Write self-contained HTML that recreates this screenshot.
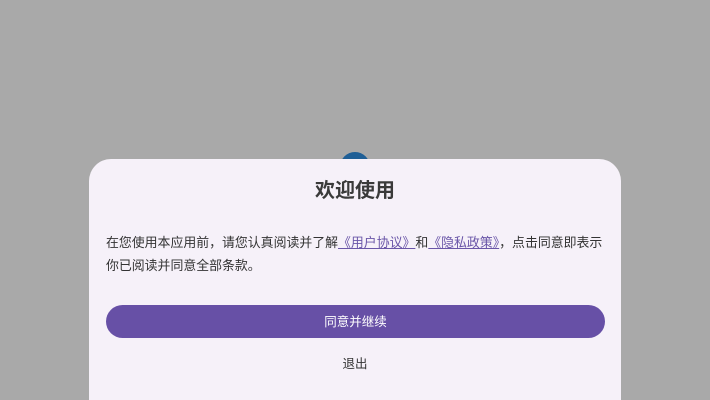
<!DOCTYPE html>
<html><head><meta charset="utf-8"><style>
html,body{margin:0;padding:0;width:710px;height:400px;overflow:hidden;background:#a9a9a9;font-family:"Liberation Sans","Noto Sans CJK SC",sans-serif;}
.dot{position:absolute;left:340px;top:152px;width:30px;height:30px;border-radius:50%;background:#1f5f96;}
.card{position:absolute;left:89px;top:159px;width:532px;height:241px;background:#f6f1f9;border-radius:22px 22px 0 0;}
.title{position:absolute;left:0;width:710px;top:177px;text-align:center;font-size:20px;font-weight:bold;color:#3a3a3a;line-height:28px;}
.body{position:absolute;left:106px;top:231px;width:500px;font-size:12.9px;line-height:23px;color:#333;}
.body a{color:#6a56a8;text-decoration:underline;}
.btn{position:absolute;left:106px;top:305px;width:499px;height:33px;border-radius:17px;background:#6750a6;color:#fff;font-size:12.5px;text-align:center;line-height:35px;}
.exit{position:absolute;left:0;width:710px;top:355px;text-align:center;font-size:12.5px;color:#333;line-height:18px;}
</style></head><body>
<div class="dot"></div>
<div class="card"></div>
<div class="title">欢迎使用</div>
<div class="body">在您使用本应用前，请您认真阅读并了解<a>《用户协议》</a>和<a>《隐私政策》</a>，点击同意即表示你已阅读并同意全部条款。</div>
<div class="btn">同意并继续</div>
<div class="exit">退出</div>
</body></html>
